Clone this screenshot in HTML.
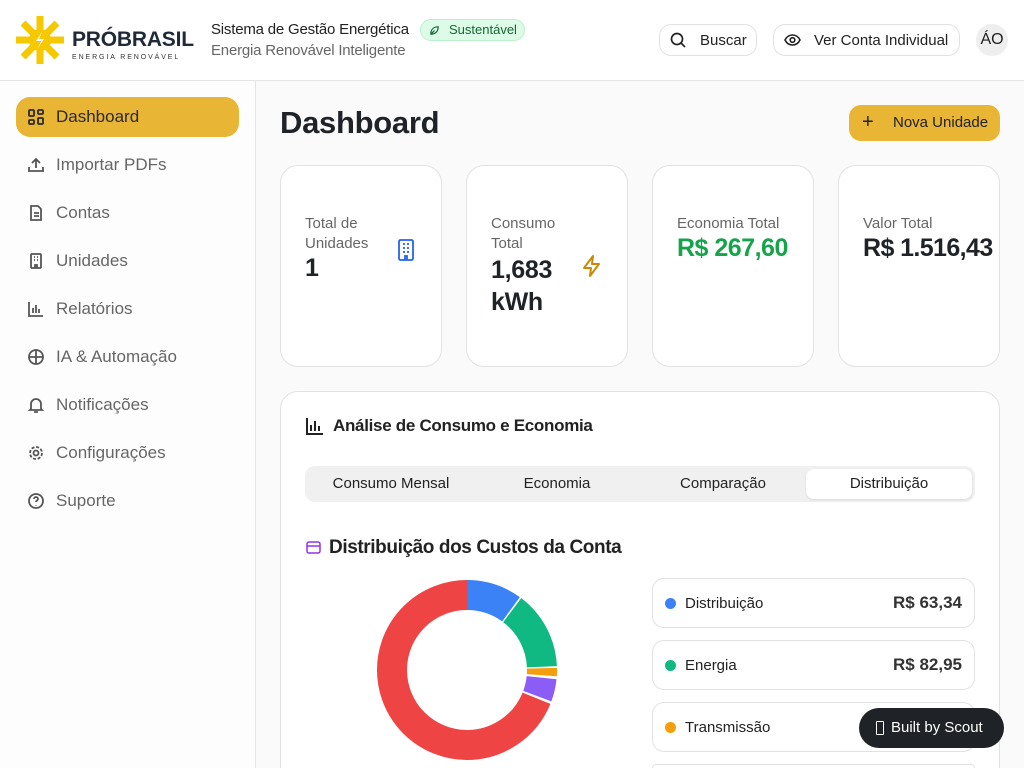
<!DOCTYPE html>
<html style="overflow:hidden;width:1024px;height:768px"><head><meta charset="utf-8"><style>
*{box-sizing:border-box;margin:0;padding:0}
body{width:1024px;height:768px;overflow:hidden;font-family:"Liberation Sans",sans-serif;background:#fafafa;color:#1f2328;position:relative}
.hdr{position:absolute;left:0;top:0;width:1024px;height:81px;background:#fff;border-bottom:1px solid #e5e5e5}
.side{position:absolute;left:0;top:81px;width:256px;height:687px;background:#fdfdfd;border-right:1px solid #e5e5e5}
.nav{position:absolute;left:16px;width:223px;height:40px;border-radius:14px;display:flex;align-items:center;padding-left:12px;font-size:17px;color:#666}
.nav svg{width:16px;height:16px;margin-right:12px;stroke:#555;fill:none;stroke-width:1.8}
.nav.act{background:#e9b534;color:#2a2a2a}
.btn{position:absolute;top:24px;height:32px;border:1px solid #e2e2e2;border-radius:12px;background:#fff;display:flex;align-items:center;font-size:15px;color:#222}
.card{position:absolute;background:#fff;border:1px solid #e2e2e2;border-radius:18px;overflow:hidden}
.lbl{font-size:15px;color:#666;line-height:20px}
.leg{position:absolute;left:652px;width:323px;height:50px;border:1px solid #e2e2e2;border-radius:12px;background:#fff;display:flex;align-items:center;padding:0 12px;font-size:15px;color:#222}
.dot{width:11px;height:11px;border-radius:50%;margin-right:9px}
.leg b{margin-left:auto;font-size:17px;color:#333}
</style></head><body>
<div class="hdr">
 <svg style="position:absolute;left:16px;top:16px" width="48" height="48" viewBox="0 0 48 48"><g stroke="#f5c800" stroke-width="7"><line x1="24" y1="0" x2="24" y2="48"/><line x1="0" y1="24" x2="48" y2="24"/><line x1="7" y1="7" x2="41" y2="41"/><line x1="41" y1="7" x2="7" y2="41"/></g><circle cx="24" cy="24" r="11" fill="#f5c800"/><path d="M26 16l-6 9h5l-3 7 6-9h-5z" fill="#fff"/></svg>
 <div style="position:absolute;left:72px;top:28px;font-size:21px;font-weight:bold;color:#1f2937;letter-spacing:-0.2px">PRÓBRASIL</div>
 <div style="position:absolute;left:72px;top:54px;font-size:7px;letter-spacing:1.9px;color:#333">ENERGIA RENOVÁVEL</div>
 <div style="position:absolute;left:211px;top:21px;font-size:15px;color:#222;letter-spacing:-0.2px">Sistema de Gestão Energética</div>
 <div style="position:absolute;left:420px;top:19px;height:22px;width:105px;border-radius:11px;background:#dcfce7;border:1px solid #bbf0cc;color:#166534;font-size:13px;line-height:20px;padding-left:28px">Sustentável</div>
 <svg style="position:absolute;left:429px;top:25px" width="11" height="11" viewBox="0 0 12 12" fill="none" stroke="#166534" stroke-width="1.3"><path d="M2 10C2 4 6 2 10 2 10 7 7 10 2 10ZM2 10 6 6"/></svg>
 <div style="position:absolute;left:211px;top:42px;font-size:15px;color:#666;letter-spacing:-0.2px">Energia Renovável Inteligente</div>
 <div class="btn" style="left:659px;width:98px;padding-left:40px">Buscar</div>
 <svg style="position:absolute;left:670px;top:32px" width="16" height="16" viewBox="0 0 16 16" fill="none" stroke="#222" stroke-width="1.7"><circle cx="7" cy="7" r="5.5"/><path d="M11 11l4 4"/></svg>
 <div class="btn" style="left:773px;width:187px;padding-left:40px">Ver Conta Individual</div>
 <svg style="position:absolute;left:784px;top:32px" width="17" height="16" viewBox="0 0 17 16" fill="none" stroke="#222" stroke-width="1.6"><path d="M1 8C3 4 6 3 8.5 3S14 4 16 8C14 12 11 13 8.5 13S3 12 1 8Z"/><circle cx="8.5" cy="8" r="2.3"/></svg>
 <div style="position:absolute;left:976px;top:24px;width:32px;height:32px;border-radius:50%;background:#eee;font-size:16px;line-height:32px;text-align:center;color:#222">ÁO</div>
</div>
<div class="side"></div>
<div class="nav act" style="top:97px"><svg viewBox="0 0 16 16" style="stroke:#2a2a2a"><rect x="1" y="1" width="5" height="6" rx="1"/><rect x="10" y="1" width="5" height="4" rx="1"/><rect x="1" y="11" width="5" height="4" rx="1"/><rect x="10" y="9" width="5" height="6" rx="1"/></svg>Dashboard</div>
<div class="nav" style="top:145px"><svg viewBox="0 0 16 16"><path d="M1 10v4h14v-4M8 11V2M4 6l4-4 4 4"/></svg>Importar PDFs</div>
<div class="nav" style="top:193px"><svg viewBox="0 0 16 16"><path d="M3 1h7l3 3v11H3zM6 8h5M6 11h5"/></svg>Contas</div>
<div class="nav" style="top:241px"><svg viewBox="0 0 16 16"><rect x="3" y="1" width="10" height="14" rx="1"/><path d="M6 4h1M9 4h1M6 7h1M9 7h1M7 15v-3h2v3"/></svg>Unidades</div>
<div class="nav" style="top:289px"><svg viewBox="0 0 16 16"><path d="M1 1v14h14M5 12V7M8 12V4M11 12V8"/></svg>Relatórios</div>
<div class="nav" style="top:337px"><svg viewBox="0 0 16 16"><circle cx="8" cy="8" r="7"/><path d="M8 1v14M1 8h14"/></svg>IA &amp; Automação</div>
<div class="nav" style="top:385px"><svg viewBox="0 0 16 16"><path d="M3 12V7a5 5 0 0110 0v5l1 1H2zM6 15h4"/></svg>Notificações</div>
<div class="nav" style="top:433px"><svg viewBox="0 0 16 16"><circle cx="8" cy="8" r="2.5"/><circle cx="8" cy="8" r="6" stroke-dasharray="3 1.7"/></svg>Configurações</div>
<div class="nav" style="top:481px"><svg viewBox="0 0 16 16"><circle cx="8" cy="8" r="7"/><path d="M6 6a2 2 0 114 0c0 1.5-2 1.5-2 3M8 12v.5"/></svg>Suporte</div>

<div style="position:absolute;left:280px;top:105px;font-size:31px;font-weight:bold;color:#1f2328;letter-spacing:-0.3px">Dashboard</div>
<div style="position:absolute;left:849px;top:105px;width:151px;height:36px;border-radius:12px;background:#e9b534;font-size:15px;line-height:36px;padding-left:44px;color:#222">Nova Unidade</div>
<div style="position:absolute;left:862px;top:111px;font-size:20px;color:#222">+</div>

<div class="card" style="left:280px;top:165px;width:162px;height:202px"><div class="lbl" style="position:absolute;left:24px;top:48px">Total de<br>Unidades</div><div style="position:absolute;left:24px;top:88px;font-size:25px;font-weight:bold">1</div>
<svg style="position:absolute;left:115px;top:73px" width="20" height="22" viewBox="0 0 20 22" fill="none" stroke="#2563eb" stroke-width="1.8"><rect x="3" y="1" width="14" height="20" rx="1.5"/><path d="M7 5h2M11 5h2M7 9h2M11 9h2M7 13h2M11 13h2M9 21v-4h2v4"/></svg></div>
<div class="card" style="left:466px;top:165px;width:162px;height:202px"><div class="lbl" style="position:absolute;left:24px;top:48px">Consumo<br>Total</div><div style="position:absolute;left:24px;top:88px;font-size:25px;font-weight:bold;line-height:32px;letter-spacing:-0.3px">1,683<br>kWh</div>
<svg style="position:absolute;left:113px;top:88px" width="24" height="24" viewBox="0 0 24 24" fill="none" stroke="#ca8a04" stroke-width="2" stroke-linejoin="round"><path d="M13 2L4 14h7l-1 8 9-12h-7z"/></svg></div>
<div class="card" style="left:652px;top:165px;width:162px;height:202px"><div class="lbl" style="position:absolute;left:24px;top:48px">Economia Total</div><div style="position:absolute;left:24px;top:68px;font-size:25px;font-weight:bold;color:#16a34a;white-space:nowrap;letter-spacing:-0.5px">R$ 267,60</div></div>
<div class="card" style="left:838px;top:165px;width:162px;height:202px"><div class="lbl" style="position:absolute;left:24px;top:48px">Valor Total</div><div style="position:absolute;left:24px;top:68px;font-size:25px;font-weight:bold;white-space:nowrap;letter-spacing:-0.6px">R$ 1.516,43</div></div>

<div class="card" style="left:280px;top:391px;width:720px;height:400px"></div>
<svg style="position:absolute;left:306px;top:417px" width="18" height="18" viewBox="0 0 18 18" fill="none" stroke="#222" stroke-width="2"><path d="M1 1v16h16M5 14V8M9 14V4M13 14V9"/></svg>
<div style="position:absolute;left:333px;top:416px;font-size:17px;font-weight:bold;color:#222;letter-spacing:-0.3px">Análise de Consumo e Economia</div>
<div style="position:absolute;left:305px;top:466px;width:670px;height:36px;border-radius:10px;background:#f0f0f0"></div>
<div style="position:absolute;left:806px;top:469px;width:166px;height:30px;border-radius:8px;background:#fff;box-shadow:0 1px 2px rgba(0,0,0,.1)"></div>
<div style="position:absolute;top:475px;left:308px;width:664px;display:flex;font-size:15px;color:#222"><span style="flex:1;text-align:center">Consumo Mensal</span><span style="flex:1;text-align:center">Economia</span><span style="flex:1;text-align:center">Comparação</span><span style="flex:1;text-align:center">Distribuição</span></div>
<svg style="position:absolute;left:306px;top:541px" width="15" height="13" viewBox="0 0 15 13" fill="none" stroke="#9333ea" stroke-width="1.5"><rect x="1" y="1" width="13" height="11" rx="2"/><path d="M1 5h13"/></svg>
<div style="position:absolute;left:329px;top:537px;font-size:19px;font-weight:bold;color:#222;letter-spacing:-0.4px">Distribuição dos Custos da Conta</div>
<svg style="position:absolute;left:367px;top:570px" width="200" height="200" viewBox="0 0 200 200">
<g transform="rotate(-90 100 100)" fill="none" stroke-width="30">
<circle cx="100" cy="100" r="75" stroke="#ef4444" stroke-dasharray="325 146.2" stroke-dashoffset="-146.7"/>
<circle cx="100" cy="100" r="75" stroke="#3b82f6" stroke-dasharray="47 424.2" stroke-dashoffset="0"/>
<circle cx="100" cy="100" r="75" stroke="#10b981" stroke-dasharray="66 405.2" stroke-dashoffset="-48.5"/>
<circle cx="100" cy="100" r="75" stroke="#f59e0b" stroke-dasharray="7 464.2" stroke-dashoffset="-116"/>
<circle cx="100" cy="100" r="75" stroke="#8b5cf6" stroke-dasharray="19 452.2" stroke-dashoffset="-125.5"/>
</g></svg>
<div class="leg" style="top:578px"><span class="dot" style="background:#3b82f6"></span>Distribuição<b>R$ 63,34</b></div>
<div class="leg" style="top:640px"><span class="dot" style="background:#10b981"></span>Energia<b>R$ 82,95</b></div>
<div class="leg" style="top:702px"><span class="dot" style="background:#f59e0b"></span>Transmissão</div>
<div class="leg" style="top:764px;height:4px;border-bottom:none;border-radius:12px 12px 0 0"></div>
<div style="position:absolute;left:859px;top:708px;width:145px;height:40px;border-radius:20px;background:#1f2328;color:#fff;font-size:15px;line-height:40px;padding-left:32px">Built by Scout</div>
<div style="position:absolute;left:876px;top:721px;width:8px;height:14px;border:1px solid #fff;border-radius:1px"></div>
</body></html>
